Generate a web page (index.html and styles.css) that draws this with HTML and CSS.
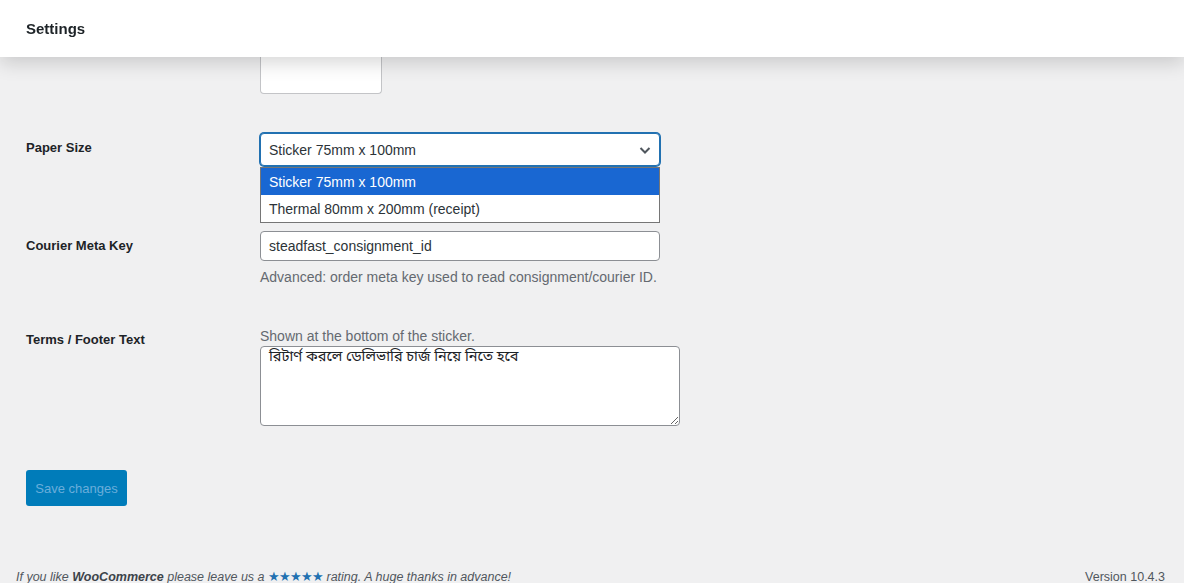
FILE: index.html
```html
<!DOCTYPE html>
<html>
    <head>
        <title>Settings</title>
        <link rel="stylesheet" href="styles.css">
    </head>
    <body>
        <div class="topbar">
            <h1>Settings</h1>
        </div>

        <div class="wrap">
            <div class="row row-logo">
                <div class="label"></div>
                <div class="field"><div class="logo-box"></div></div>
            </div>

            <div class="row row-paper">
                <div class="label">Paper Size</div>
                <div class="field">
                    <div class="select-wrap">
                        <div class="select focused">
                            <span>Sticker 75mm x 100mm</span>
                            <svg width="14" height="14" viewBox="0 0 14 14"><path d="M2.5 5 L7 9.5 L11.5 5" fill="none" stroke="#50575e" stroke-width="2"/></svg>
                        </div>
                        <div class="options">
                            <div class="option selected">Sticker 75mm x 100mm</div>
                            <div class="option">Thermal 80mm x 200mm (receipt)</div>
                        </div>
                    </div>
                </div>
            </div>

            <div class="row row-courier">
                <div class="label">Courier Meta Key</div>
                <div class="field">
                    <div class="input">steadfast_consignment_id</div>
                    <p class="description">Advanced: order meta key used to read consignment/courier ID.</p>
                </div>
            </div>

            <div class="row row-terms">
                <div class="label">Terms / Footer Text</div>
                <div class="field">
                    <p class="description top">Shown at the bottom of the sticker.</p>
                    <textarea class="textarea">রিটার্ণ করলে ডেলিভারি চার্জ নিয়ে নিতে হবে</textarea>
                </div>
            </div>

            <button class="button-primary">Save changes</button>
        </div>

        <div class="footer">
            <p class="footer-left">If you like <strong>WooCommerce</strong> please leave us a <span class="stars">★★★★★</span> rating. A huge thanks in advance!</p>
            <p class="footer-right">Version 10.4.3</p>
        </div>
    </body>
</html>
```

FILE: styles.css
```css
body { margin: 0; background: #f0f0f1; font-family: "Segoe UI", "Liberation Sans", Arial, sans-serif; font-size: 14px; color: #1d2327; height: 583px; overflow: hidden; }
.topbar { position: fixed; top: 0; left: 0; right: 0; height: 57px; background: #fff; box-shadow: 0 6px 18px rgba(0,0,0,0.16); z-index: 10; display: flex; align-items: center; padding-left: 26px; }
.topbar h1 { margin: 0; font-size: 15px; font-weight: bold; color: #1d2327; }
.wrap { padding-left: 26px; }
.row { display: grid; grid-template-columns: 234px 1fr; }
.label { font-size: 13px; font-weight: bold; line-height: 20px; padding-top: 5px; }
.field { position: relative; }
.logo-box { width: 122px; height: 94px; background: #fff; border: 1px solid #c3c4c7; border-top: none; border-radius: 0 0 4px 4px; box-sizing: border-box; }
.row-paper { margin-top: 39px; }
.select-wrap { position: relative; width: 400px; }
.select { height: 33px; box-sizing: border-box; border: 1px solid #8c8f94; border-radius: 4px; background: #fff; display: flex; align-items: center; justify-content: space-between; padding: 0 7px 0 8px; color: #2c3338; }
.select.focused { border-color: #2271b1; box-shadow: 0 0 0 1px #2271b1; }
.select svg { margin-top: 1px; }
.options { position: absolute; left: 0; right: 0; top: 34px; background: #fff; border: 1px solid #767676; z-index: 5; }
.option { height: 27px; line-height: 28px; padding-left: 8px; color: #2c3338; }
.option.selected { background: #1967d2; color: #fff; }
.row-courier { margin-top: 65px; }
.input { width: 400px; height: 30px; box-sizing: border-box; border: 1px solid #8c8f94; border-radius: 4px; background: #fff; padding: 0 8px; line-height: 28px; color: #2c3338; }
.description { margin: 6px 0 0; line-height: 20px; color: #646970; }
.description.top { margin: 0; }
.row-terms { margin-top: 39px; }
.row-terms .label { padding-top: 4px; }
.textarea { display: block; width: 420px; height: 80px; box-sizing: border-box; border: 1px solid #8c8f94; border-radius: 4px; background: #fff; padding: 1px 8px 0; margin: 0; font-family: "Noto Sans Bengali", "Lohit Bengali", "FreeSerif", "Liberation Sans", sans-serif; font-size: 14.5px; line-height: 20px; color: #1d2327; resize: vertical; }
.button-primary { margin-top: 44px; width: 101px; height: 36px; background: #007cba; border: none; border-radius: 3px; color: #6aaedb; font-family: inherit; font-size: 13px; padding: 0; }
.footer { position: absolute; left: 0; right: 0; top: 568px; display: flex; justify-content: space-between; padding: 0 19px 0 16px; color: #50575e; font-size: 12.5px; }
.footer p { margin: 0; line-height: 18px; }
.footer-left { font-style: italic; }
.footer-left strong { color: #3c434a; }
.stars { color: #2271b1; font-style: normal; letter-spacing: -1px; }
```
